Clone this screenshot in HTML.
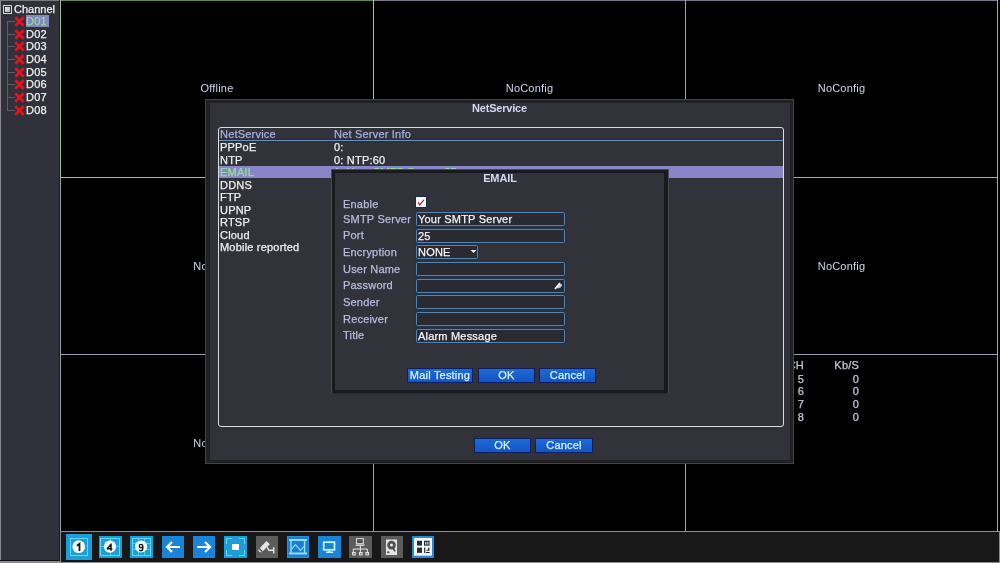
<!DOCTYPE html>
<html><head><meta charset="utf-8">
<style>
*{margin:0;padding:0;box-sizing:border-box}
html,body{width:1000px;height:563px;overflow:hidden;background:#000}
body{position:relative;font-family:"Liberation Sans",sans-serif;font-size:11px;color:#e8e8f0;letter-spacing:0.2px;-webkit-text-stroke:0.25px}
.a{position:absolute}
.t{position:absolute;white-space:nowrap;line-height:12px}
/* left panel */
#lp{left:0;top:0;width:60px;height:563px;background:#30313a;border-left:1px solid #8a8a90;border-top:1px solid #7a7a80}
.gl{position:absolute;background:#a0a0b8}
.cell{position:absolute;color:#d0d4ec;text-align:center;-webkit-text-stroke:0}
.dlg{position:absolute}
.inp{position:absolute;left:416px;width:149px;height:14px;border:1px solid #5684ae;border-radius:1.5px;background:#292a32;box-shadow:0 0 0 1px #1f344c}
.lab{position:absolute;left:343px;color:#b8bce0}
.btn{position:absolute;height:13px;background:linear-gradient(#1e6ad8,#1354c4);color:#d4f4ff;text-align:center;line-height:12px;box-shadow:0 0 0 1px #0c2060}
.ico{position:absolute;top:536px;width:23px;height:22px}
</style></head><body><div id="root" style="position:absolute;left:0;top:0;width:1000px;height:563px;will-change:transform">

<!-- left panel -->
<div class="a" id="lp"></div>
<div class="a" style="left:0;top:560px;width:60px;height:1px;background:#111"></div><div class="a" style="left:59px;top:0;width:1px;height:561px;background:#1c1c20"></div>
<div class="a" style="left:0;top:561px;width:60px;height:2px;background:#8a8a90"></div>

<!-- tree -->
<div class="a" style="left:3px;top:5px;width:9px;height:9px;border:1px solid #d8d8dc"></div>
<div class="a" style="left:5px;top:7px;width:5px;height:5px;background:linear-gradient(135deg,#f0f0f0,#b0b0b4)"></div>
<div class="t" style="left:14px;top:3px;color:#f0f0f0;letter-spacing:0">Channel</div>
<div class="a" style="left:7px;top:21px;width:1px;height:90px;background:#5e5e68"></div>
<div class="a" style="left:8px;top:21px;width:7px;height:1px;background:#5e5e68"></div>
<svg class="a" style="left:14px;top:16px" width="11" height="11" viewBox="0 0 11 11"><path d="M1.3 1.3L9.7 9.7M9.7 1.3L1.3 9.7" stroke="#e8121c" stroke-width="2.7"/></svg>
<div class="a" style="left:26px;top:15px;width:23px;height:12px;background:#8488c0"></div>
<div class="t" style="left:26px;top:15px;color:#98d898">D01</div>
<div class="a" style="left:8px;top:34px;width:7px;height:1px;background:#5e5e68"></div>
<svg class="a" style="left:14px;top:29px" width="11" height="11" viewBox="0 0 11 11"><path d="M1.3 1.3L9.7 9.7M9.7 1.3L1.3 9.7" stroke="#e8121c" stroke-width="2.7"/></svg>
<div class="t" style="left:26px;top:28px;color:#f0f0f0">D02</div>
<div class="a" style="left:8px;top:46px;width:7px;height:1px;background:#5e5e68"></div>
<svg class="a" style="left:14px;top:41px" width="11" height="11" viewBox="0 0 11 11"><path d="M1.3 1.3L9.7 9.7M9.7 1.3L1.3 9.7" stroke="#e8121c" stroke-width="2.7"/></svg>
<div class="t" style="left:26px;top:40px;color:#f0f0f0">D03</div>
<div class="a" style="left:8px;top:59px;width:7px;height:1px;background:#5e5e68"></div>
<svg class="a" style="left:14px;top:54px" width="11" height="11" viewBox="0 0 11 11"><path d="M1.3 1.3L9.7 9.7M9.7 1.3L1.3 9.7" stroke="#e8121c" stroke-width="2.7"/></svg>
<div class="t" style="left:26px;top:53px;color:#f0f0f0">D04</div>
<div class="a" style="left:8px;top:72px;width:7px;height:1px;background:#5e5e68"></div>
<svg class="a" style="left:14px;top:67px" width="11" height="11" viewBox="0 0 11 11"><path d="M1.3 1.3L9.7 9.7M9.7 1.3L1.3 9.7" stroke="#e8121c" stroke-width="2.7"/></svg>
<div class="t" style="left:26px;top:66px;color:#f0f0f0">D05</div>
<div class="a" style="left:8px;top:84px;width:7px;height:1px;background:#5e5e68"></div>
<svg class="a" style="left:14px;top:79px" width="11" height="11" viewBox="0 0 11 11"><path d="M1.3 1.3L9.7 9.7M9.7 1.3L1.3 9.7" stroke="#e8121c" stroke-width="2.7"/></svg>
<div class="t" style="left:26px;top:78px;color:#f0f0f0">D06</div>
<div class="a" style="left:8px;top:97px;width:7px;height:1px;background:#5e5e68"></div>
<svg class="a" style="left:14px;top:92px" width="11" height="11" viewBox="0 0 11 11"><path d="M1.3 1.3L9.7 9.7M9.7 1.3L1.3 9.7" stroke="#e8121c" stroke-width="2.7"/></svg>
<div class="t" style="left:26px;top:91px;color:#f0f0f0">D07</div>
<div class="a" style="left:8px;top:110px;width:7px;height:1px;background:#5e5e68"></div>
<svg class="a" style="left:14px;top:105px" width="11" height="11" viewBox="0 0 11 11"><path d="M1.3 1.3L9.7 9.7M9.7 1.3L1.3 9.7" stroke="#e8121c" stroke-width="2.7"/></svg>
<div class="t" style="left:26px;top:104px;color:#f0f0f0">D08</div>

<!-- video grid -->
<div class="gl" style="left:60px;top:0;width:938px;height:1px;background:#78788e"></div>
<div class="gl" style="left:60px;top:0;width:314px;height:1px;background:#5a8a5e"></div>
<div class="gl" style="left:60px;top:0;width:1px;height:563px;background:#a0a0a8"></div>
<div class="gl" style="left:60px;top:0;width:1px;height:178px;background:#9cc49c"></div>
<div class="gl" style="left:373px;top:0;width:1px;height:532px"></div>
<div class="gl" style="left:373px;top:0;width:1px;height:178px;background:#9cc49c"></div>
<div class="gl" style="left:685px;top:0;width:1px;height:532px"></div>
<div class="gl" style="left:997px;top:0;width:1px;height:532px;background:#a8a8b8"></div>
<div class="gl" style="left:60px;top:177px;width:938px;height:1px;background:#a8a8b8"></div>
<div class="gl" style="left:60px;top:177px;width:314px;height:1px;background:#9cc49c"></div>
<div class="gl" style="left:60px;top:354px;width:938px;height:1px;background:#a0a0b8"></div>

<div class="t cell" style="left:61px;top:82px;width:312px">Offline</div>
<div class="t cell" style="left:374px;top:82px;width:311px">NoConfig</div>
<div class="t cell" style="left:686px;top:82px;width:311px">NoConfig</div>
<div class="t cell" style="left:61px;top:260px;width:312px">NoConfig</div>
<div class="t cell" style="left:686px;top:260px;width:311px">NoConfig</div>
<div class="t cell" style="left:61px;top:437px;width:312px">NoConfig</div>

<!-- table -->
<div class="t" style="left:763px;top:359px;width:41px;text-align:right;color:#c8c8dc">CH</div>
<div class="t" style="left:818px;top:359px;width:41px;text-align:right;color:#c8c8dc">Kb/S</div>
<div class="t" style="left:763px;top:373px;width:41px;text-align:right;color:#c8c8dc">5</div>
<div class="t" style="left:818px;top:373px;width:41px;text-align:right;color:#c8c8dc">0</div>
<div class="t" style="left:763px;top:385px;width:41px;text-align:right;color:#c8c8dc">6</div>
<div class="t" style="left:818px;top:385px;width:41px;text-align:right;color:#c8c8dc">0</div>
<div class="t" style="left:763px;top:398px;width:41px;text-align:right;color:#c8c8dc">7</div>
<div class="t" style="left:818px;top:398px;width:41px;text-align:right;color:#c8c8dc">0</div>
<div class="t" style="left:763px;top:411px;width:41px;text-align:right;color:#c8c8dc">8</div>
<div class="t" style="left:818px;top:411px;width:41px;text-align:right;color:#c8c8dc">0</div>
<!-- toolbar -->
<div class="a" style="left:60px;top:531px;width:940px;height:32px;background:#181818;border:1px solid #8a8a8e;border-top-color:#909094"></div>
<svg class="a" style="left:0;top:0" width="1000" height="563" viewBox="0 0 1000 563"><rect x="66" y="534" width="26" height="26" fill="#1e9ed8"/><rect x="70.5" y="538.5" width="17" height="17" fill="none" stroke="#5fd8ff"/><circle cx="78.7" cy="546.7" r="6.4" fill="#f4fdff"/><path d="M76.9 545.7L79.5 543.8V550.9" stroke="#151515" stroke-width="1.75" fill="none"/><rect x="99" y="536" width="23" height="22" fill="#1e9ed8"/><rect x="100.5" y="538.5" width="19" height="17" fill="none" stroke="#5fd8ff"/><path d="M110.5 538V556M100 546.5H120" stroke="#5fd8ff" stroke-width="0.8"/><circle cx="110" cy="546.6" r="6.1" fill="#f4fdff"/><path d="M111 550.7V544.1L107.3 548.7H112.3" stroke="#151515" stroke-width="1.5" fill="none" stroke-linejoin="round"/><rect x="130" y="536" width="23" height="22" fill="#1e9ed8"/><rect x="132.5" y="538.5" width="18" height="17" fill="none" stroke="#5fd8ff"/><path d="M138.5 538V556M144.5 538V556M132 543.5H151M132 549.5H151" stroke="#5fd8ff" stroke-width="0.8"/><circle cx="141.1" cy="546.5" r="6.1" fill="#f4fdff"/><circle cx="141" cy="546.1" r="1.75" fill="none" stroke="#151515" stroke-width="1.4"/><path d="M142.75 546V548.6Q142.6 550.7 140.9 550.7Q139.7 550.7 139.3 549.7" stroke="#151515" stroke-width="1.4" fill="none"/><rect x="162" y="536" width="22" height="22" fill="#1a84d8"/><path d="M167 547H180M172 542L167 547L172 552" stroke="#fff" stroke-width="2.2" fill="none"/><rect x="193" y="536" width="22" height="22" fill="#1a84d8"/><path d="M197 547H210M205 542L210 547L205 552" stroke="#fff" stroke-width="2.2" fill="none"/><rect x="224" y="536" width="23" height="22" fill="#1e9ed8"/><path d="M226.5 544V538.5H232M239 538.5H244.5V544M244.5 550V555.5H239M232 555.5H226.5V550" stroke="#5fd8ff" fill="none"/><rect x="232" y="544" width="7" height="6" fill="#fff"/><rect x="256" y="536" width="22" height="22" fill="#5c5c5c"/><path d="M259.8 547.9L266.5 541L269.9 544.2L262.8 551.2Z" fill="#e6e6e6"/><path d="M259 549.3Q258.6 551.8 261.2 551.8" stroke="#e6e6e6" stroke-width="1.2" fill="none"/><path d="M267.3 547.3L268.8 550.3H273.5M273.7 547.2V553.4" stroke="#e6e6e6" stroke-width="1.4" fill="none"/><rect x="287" y="536" width="22" height="22" fill="#2a8ce0"/><rect x="288" y="537" width="20" height="20" fill="#1a7ed8"/><path d="M289 540H307M289 553.5H307" stroke="#90e0ff" stroke-width="1.8" fill="none"/><path d="M291 540V554M304.6 540V554" stroke="#90e0ff" stroke-width="1.4" fill="none"/><path d="M291.5 549.5L295.4 544.6L300.5 550.4L304.5 546" stroke="#90e0ff" stroke-width="1.1" fill="none"/><rect x="318" y="536" width="23" height="22" fill="#1a84d8"/><rect x="323.7" y="542.2" width="10.8" height="7.6" fill="none" stroke="#c8f8ff" stroke-width="1.7"/><path d="M329.2 550.5V552M326 552.3H333" stroke="#c8f8ff" stroke-width="1.6"/><rect x="349" y="536" width="23" height="22" fill="#5c5c5c"/><rect x="356.5" y="538.7" width="6.8" height="5" fill="#505050" stroke="#e4e4e4"/><path d="M355.8 545.2H364.5" stroke="#e4e4e4" stroke-width="1.3"/><path d="M360.4 545.5V549M353.3 552V549H367.3V552M360.4 549V552" stroke="#e4e4e4" fill="none"/><rect x="352.6" y="552.5" width="2.6" height="2.4" fill="#7a7a7a" stroke="#e4e4e4"/><rect x="359.5" y="552.5" width="2.6" height="2.4" fill="#7a7a7a" stroke="#e4e4e4"/><rect x="365.9" y="552.5" width="2.6" height="2.4" fill="#7a7a7a" stroke="#e4e4e4"/><rect x="381" y="536" width="22" height="22" fill="#5c5c5c"/><rect x="386" y="539.5" width="11" height="15.5" fill="#e4e4e4"/><circle cx="391.5" cy="545.1" r="4.3" fill="#505050"/><circle cx="391.5" cy="545.1" r="1.5" fill="#f0f0f0"/><path d="M393 547.5L395 551.3" stroke="#4e4e4e" stroke-width="1.7"/><path d="M388.3 551V553.6M387 552.3H389.6" stroke="#5a5a5a" stroke-width="1"/><rect x="412" y="536" width="22" height="22" fill="#2a88d8"/><rect x="414" y="538" width="18" height="17.7" fill="#f0faff"/><rect x="417" y="540.8" width="5" height="4.8" fill="#2e2e2e"/><rect x="417" y="547.6" width="5" height="5.3" fill="#2e2e2e"/><rect x="424.6" y="541.3" width="4.4" height="3.8" fill="none" stroke="#1a1a1a" stroke-width="1.1"/><rect x="426.3" y="542" width="1" height="2.5" fill="#1a1a1a"/><path d="M424.7 547.6V553M426 552.5H429.6M428.8 547.6V550.2H426.5" stroke="#1a1a1a" stroke-width="1.1" fill="none"/></svg>

<!-- dialogs -->
<div class="a" style="left:205px;top:99px;width:589px;height:365px;background:#212125;border:1px solid #424248"></div>
<div class="a" style="left:210px;top:103px;width:580px;height:357px;background:#31323a"></div>
<div class="t" style="left:205px;top:102px;width:589px;text-align:center;font-weight:bold;color:#d4d8f0;letter-spacing:-0.2px;-webkit-text-stroke:0">NetService</div>
<div class="a" style="left:218px;top:127px;width:566px;height:300px;border:1px solid #dcdce4;border-radius:3px"></div>
<div class="a" style="left:219px;top:137px;width:564px;height:3px;background:linear-gradient(#32323e,#2c2c44)"></div>
<div class="a" style="left:219px;top:139px;width:564px;height:3px;background:#1c3048"></div><div class="a" style="left:219px;top:140px;width:564px;height:1px;background:#6a94b8"></div>
<div class="t" style="left:220px;top:128px;color:#a8b0dc">NetService</div>
<div class="t" style="left:334px;top:128px;color:#a8b0dc">Net Server Info</div>
<div class="t" style="left:220px;top:141px;color:#f0f0f4">PPPoE</div>
<div class="t" style="left:334px;top:141px;color:#f0f0f4">0:</div>
<div class="t" style="left:220px;top:154px;color:#f0f0f4">NTP</div>
<div class="t" style="left:334px;top:154px;color:#f0f0f4">0: NTP:60</div>
<div class="a" style="left:219px;top:166px;width:564px;height:12px;background:#8985c9"></div>
<div class="t" style="left:220px;top:166px;color:#98e098">EMAIL</div>
<div class="t" style="left:334px;top:166px;color:#98e098">1: Your SMTP Server:25</div>
<div class="t" style="left:220px;top:179px;color:#f0f0f4">DDNS</div>
<div class="t" style="left:220px;top:191px;color:#f0f0f4">FTP</div>
<div class="t" style="left:220px;top:204px;color:#f0f0f4">UPNP</div>
<div class="t" style="left:220px;top:216px;color:#f0f0f4">RTSP</div>
<div class="t" style="left:220px;top:229px;color:#f0f0f4">Cloud</div>
<div class="t" style="left:220px;top:241px;color:#f0f0f4">Mobile reported</div>
<div class="btn" style="left:475px;top:439px;width:55px">OK</div>
<div class="btn" style="left:536px;top:439px;width:56px">Cancel</div>
<div class="a" style="left:331px;top:169px;width:338px;height:225px;background:#1a1a1e;border:1px solid #4a4a50;border-bottom-color:#2a2a2e"></div>
<div class="a" style="left:335px;top:173px;width:329px;height:217px;background:#31323a"></div>
<div class="t" style="left:331px;top:172px;width:338px;text-align:center;font-weight:bold;color:#d4d8f0;letter-spacing:-0.1px;-webkit-text-stroke:0">EMAIL</div>
<div class="t lab" style="top:198px">Enable</div>
<div class="t lab" style="top:213px">SMTP Server</div>
<div class="t lab" style="top:229px">Port</div>
<div class="t lab" style="top:246px">Encryption</div>
<div class="t lab" style="top:263px">User Name</div>
<div class="t lab" style="top:279px">Password</div>
<div class="t lab" style="top:296px">Sender</div>
<div class="t lab" style="top:313px">Receiver</div>
<div class="t lab" style="top:329px">Title</div>
<div class="a" style="left:416px;top:197px;width:10px;height:10px;background:#f2f6fa;box-shadow:0 0 0 1px #1c2c44"></div>
<svg class="a" style="left:416px;top:197px" width="10" height="10" viewBox="416 197 10 10"><path d="M418.3 202.4L419.7 205L423.9 199.8" stroke="#a02838" stroke-width="1.2" fill="none"/></svg>
<div class="inp" style="top:212px"></div>
<div class="t" style="left:418px;top:213px;color:#f4f4f8">Your SMTP Server</div>
<div class="inp" style="top:229px"></div>
<div class="t" style="left:418px;top:230px;color:#f4f4f8">25</div>
<div class="inp" style="top:262px"></div>
<div class="inp" style="top:279px"></div>
<div class="inp" style="top:295px"></div>
<div class="inp" style="top:312px"></div>
<div class="inp" style="top:329px"></div>
<div class="t" style="left:418px;top:330px;color:#f4f4f8">Alarm Message</div>
<div class="inp" style="top:245px;width:62px"></div>
<div class="t" style="left:418px;top:246px;color:#f4f4f8">NONE</div>
<svg class="a" style="left:470px;top:249px" width="7" height="5" viewBox="0 0 7 5"><path d="M0.5 1L6.5 1L3.5 4Z" fill="#e8e8f0"/></svg>
<svg class="a" style="left:552px;top:281px" width="12" height="10" viewBox="552 281 12 10"><ellipse cx="559.3" cy="286" rx="3" ry="1.9" transform="rotate(-30 559.3 286)" fill="#c4c4cc"/><path d="M555 289L560 283.2" stroke="#f4f4f8" stroke-width="1.8"/></svg>
<div class="btn" style="left:408px;top:369px;width:64px">Mail Testing</div>
<div class="btn" style="left:479px;top:369px;width:55px">OK</div>
<div class="btn" style="left:540px;top:369px;width:55px">Cancel</div>

</div></body></html>
